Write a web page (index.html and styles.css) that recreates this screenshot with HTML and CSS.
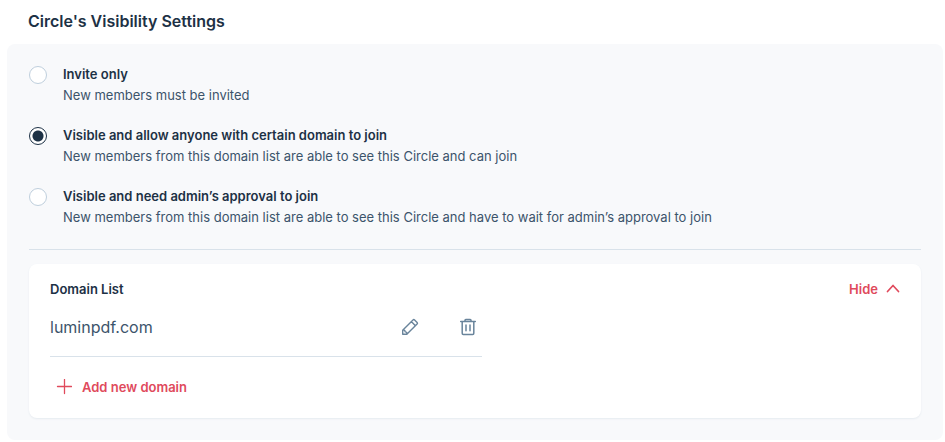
FILE: index.html
```html
<!DOCTYPE html>
<html lang="en">
<head>
<meta charset="utf-8">
<title>Circle's Visibility Settings</title>
<link rel="stylesheet" href="styles.css">
</head>
<body>
<main class="settings">
  <h1 class="settings-title">Circle's Visibility Settings</h1>
  <section class="panel">
    <div class="options" role="radiogroup" aria-label="Visibility">
      <label class="option">
        <input class="radio" type="radio" name="visibility">
        <span class="option-text">
          <span class="option-name">Invite only</span>
          <span class="option-note">New members must be invited</span>
        </span>
      </label>
      <label class="option">
        <input class="radio" type="radio" name="visibility" checked>
        <span class="option-text">
          <span class="option-name">Visible and allow anyone with certain domain to join</span>
          <span class="option-note">New members from this domain list are able to see this Circle and can join</span>
        </span>
      </label>
      <label class="option">
        <input class="radio" type="radio" name="visibility">
        <span class="option-text">
          <span class="option-name">Visible and need admin’s approval to join</span>
          <span class="option-note">New members from this domain list are able to see this Circle and have to wait for admin’s approval to join</span>
        </span>
      </label>
    </div>
    <section class="card">
      <header class="card-header">
        <h2 class="card-title">Domain List</h2>
        <button class="link-button" type="button">Hide
          <svg width="14" height="22" viewBox="0 0 14 22" fill="none" stroke="currentColor" stroke-width="1.7" stroke-linecap="round" stroke-linejoin="round"><path d="M1.500 13.500 7 7.500l5.500 6"/></svg>
        </button>
      </header>
      <div class="domain">
        <span class="domain-name">luminpdf.com</span>
        <button class="icon-button" type="button" aria-label="Edit domain">
          <svg width="18" height="18" viewBox="0 0 18 18" fill="none" stroke="currentColor" stroke-width="1.4" stroke-linejoin="round" stroke-linecap="round"><path d="M1.700 12.200 12 1.900Q12.800 1.100 13.600 1.900L16.100 4.400Q16.900 5.200 16.100 6L5.800 16.300H1.700ZM1.700 12.200Q4.200 11.800 4.100 13.900Q6.200 13.800 5.800 16.300M10.300 3.600l4.100 4.100"/></svg>
        </button>
        <button class="icon-button" type="button" aria-label="Delete domain">
          <svg width="18" height="18" viewBox="0 0 18 18" fill="none" stroke="currentColor" stroke-width="1.5" stroke-linejoin="round" stroke-linecap="round"><path d="M1.700 3.500h14.600M6 3.300V2.300Q6 1.500 6.800 1.500h4.400Q12 1.500 12 2.300v1M3.200 3.700V15.300Q3.200 16.400 4.300 16.400h9.400Q14.800 16.400 14.800 15.300V3.700M7 7.100v5.700M11 7.100v5.700"/></svg>
        </button>
      </div>
      <button class="link-button add-button" type="button">
        <svg width="16" height="16" viewBox="0 0 16 16" fill="none" stroke="currentColor" stroke-width="1.3" stroke-linecap="round"><path d="M1.500 7.500h14M8.500 .5v14"/></svg>
        Add new domain
      </button>
    </section>
  </section>
</main>
</body>
</html>
```
FILE: styles.css
```css
* {
  box-sizing: border-box;
}

body {
  margin: 0;
  background: #fff;
  color: #1d3145;
  font-family: Inter, "Liberation Sans", sans-serif;
  font-size: 13px;
  line-height: 21px;
}

.settings {
  padding: 9px 2px 2px 7px;
}

.settings-title {
  margin: 0 0 11px;
  padding-left: 21px;
  font-size: 16px;
  font-weight: 600;
  line-height: 24px;
}

.panel {
  padding: 20px 22px 22px;
  border-radius: 8px;
  background: #f8f9fb;
}

.options {
  display: flex;
  flex-direction: column;
  gap: 19px;
  padding-bottom: 21px;
  border-bottom: 1px solid #d9e2ea;
}

.option {
  display: flex;
  align-items: flex-start;
  gap: 16px;
}

.option-text {
  display: flex;
  flex-direction: column;
}

.option-name {
  font-weight: 600;
}

.option-note {
  color: #3c546b;
}

.radio {
  appearance: none;
  flex: none;
  width: 18px;
  height: 18px;
  margin: 2px 0 0;
  border: 1px solid #bfcfdd;
  border-radius: 50%;
  background: #fff;
}

.radio:checked {
  border-color: #1d3145;
  background: radial-gradient(circle, #1d3145 5px, #fff 6px);
}

.card {
  margin-top: 14px;
  padding: 14px 21px 1px;
  border-radius: 8px;
  background: #fff;
  box-shadow: 0 1px 2px #e6ebf0;
}

.card-header {
  display: flex;
  align-items: center;
  justify-content: space-between;
  height: 22px;
}

.card-title {
  margin: 0;
  font-size: 13px;
  font-weight: 600;
}

.link-button {
  display: flex;
  align-items: center;
  gap: 8px;
  padding: 0;
  border: 0;
  background: none;
  color: #e04a5c;
  font: inherit;
  font-weight: 600;
}

.domain {
  display: flex;
  align-items: center;
  gap: 40px;
  max-width: 432px;
  height: 57px;
  padding: 0 5px 2px 0;
  border-bottom: 1px solid #d9e2ea;
}

.domain-name {
  flex: 1;
  color: #3c546b;
  font-size: 16px;
}

.icon-button {
  display: flex;
  padding: 0;
  border: 0;
  background: none;
  color: #69849b;
}

.add-button {
  gap: 10px;
  height: 60px;
  padding-left: 6px;
}
```
